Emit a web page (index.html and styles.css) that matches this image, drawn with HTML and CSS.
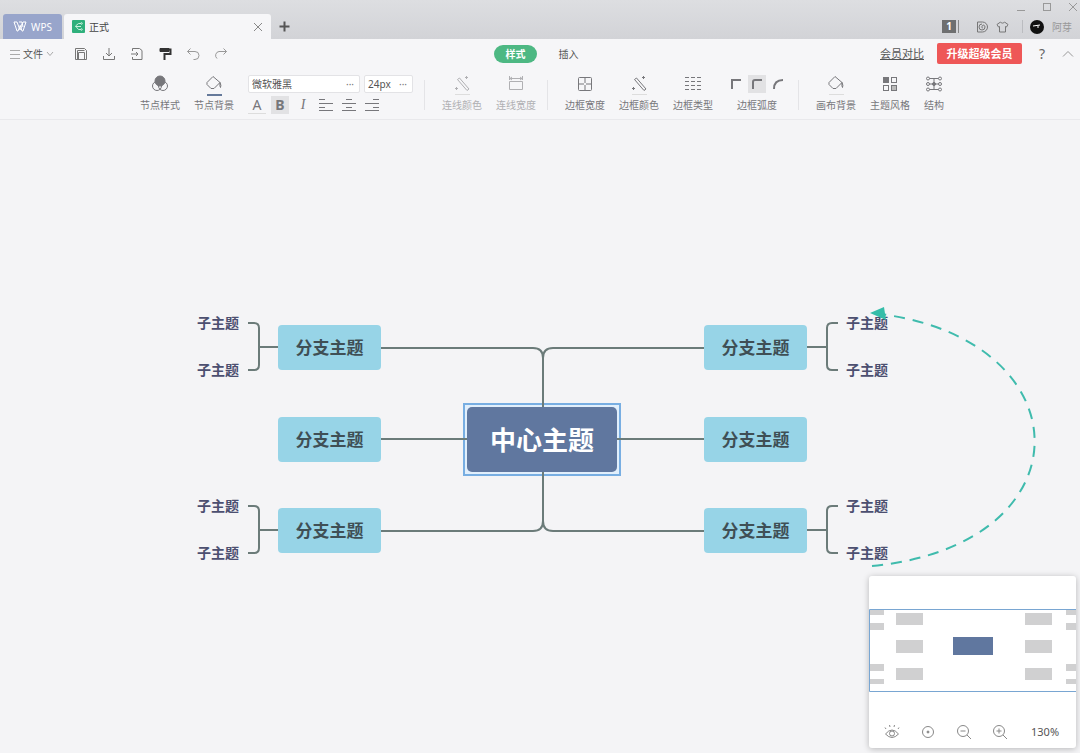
FILE: index.html
```html
<!DOCTYPE html>
<html lang="zh-CN">
<head>
    <meta charset="UTF-8">
    <meta name="viewport" content="width=device-width, initial-scale=1.0">
    <title>正式 - WPS</title>
    <link rel="stylesheet" href="styles.css">
</head>
<body>
    <header class="titlebar">
        <nav class="tabs">
            <button class="tab tab-home">
                <svg width="14" height="11" viewBox="0 0 14 11"><path d="M1 1h3l3 8 2-4M1 1l3 9h1l2-5M6 1h3l1 5M13 1h-3l-2 4M13 1l-3 9H9L7 4"/></svg>
                WPS
            </button>
            <div class="tab tab-doc">
                <svg class="doc-icon" width="13" height="13" viewBox="0 0 13 13"><rect width="13" height="13" rx="1"/><path d="M9 3.500H6.500L3.500 6l3 3.500H9M3.500 6.500H9"/><circle cx="9.500" cy="3.500" r="0.800"/><circle cx="9.500" cy="9.500" r="0.800"/></svg>
                <span class="tab-name">正式</span>
                <button class="icon-btn" aria-label="关闭"><svg width="10" height="10" viewBox="0 0 10 10"><path d="M1 1l8 8M9 1L1 9"/></svg></button>
            </div>
            <button class="icon-btn tab-add" aria-label="新建"><svg width="11" height="11" viewBox="0 0 11 11"><path d="M5.500 .5v10M.5 5.500h10"/></svg></button>
        </nav>
        <div class="title-side">
            <div class="window-controls">
                <button class="icon-btn" aria-label="最小化"><svg width="10" height="10" viewBox="0 0 10 10"><path d="M1 8.500h8"/></svg></button>
                <button class="icon-btn" aria-label="最大化"><svg width="10" height="10" viewBox="0 0 10 10"><rect x="1.500" y="1.500" width="7" height="7"/></svg></button>
                <button class="icon-btn" aria-label="关闭窗口"><svg width="10" height="10" viewBox="0 0 10 10"><path d="M1 1l8 8M9 1L1 9"/></svg></button>
            </div>
            <div class="account">
                <span class="count">1</span>
                <button class="icon-btn docer" aria-label="稻壳"><svg width="12" height="12" viewBox="0 0 12 12"><path d="M1.500 1h5a5 5 0 0 1 0 10h-5zM6 3a3 3 0 1 0 3 3c0-1.500-1.500-2.500-2.500-1.500S6 7.500 7 7"/></svg></button>
                <button class="icon-btn" aria-label="皮肤"><svg width="13" height="12" viewBox="0 0 13 12"><path d="M4.500 1L1 3.500l1.500 2.500 1-.5V11h6V5.500l1 .5L12 3.500 8.500 1c-.5 1.500-3.500 1.500-4 0z"/></svg></button>
                <i class="account-line"></i>
                <svg class="avatar" width="14" height="14" viewBox="0 0 14 14"><circle cx="7" cy="7" r="7"/><path d="M3 6l7-1M8 5.500v2.500"/></svg>
                <span class="user">阿芽</span>
            </div>
        </div>
    </header>

    <div class="menubar">
        <div class="quick">
            <button class="file-btn">
                <svg width="10" height="10" viewBox="0 0 10 10"><path d="M0 1.500h10M0 5.500h10M0 9.500h10"/></svg>
                文件
                <svg width="8" height="6" viewBox="0 0 8 6"><path d="M1 1l3 3.500L7 1"/></svg>
            </button>
            <button class="icon-btn" aria-label="保存"><svg width="14" height="14" viewBox="0 0 14 14"><path d="M1.500 1.500h9l2 2v9h-11zM4.500 5.500h6v7h-6zM3.500 12V3.500h7"/></svg></button>
            <button class="icon-btn" aria-label="下载"><svg width="14" height="14" viewBox="0 0 14 14"><path d="M7 1v8M4 6l3 3 3-3M1.500 9v3.500h11V9"/></svg></button>
            <button class="icon-btn" aria-label="导出"><svg width="14" height="14" viewBox="0 0 14 14"><path d="M2.500 4V1.500h7l2.500 2v9H2.500V10M1 7h7M6 5l2 2-2 2"/></svg></button>
            <button class="icon-btn painter" aria-label="格式刷"><svg width="14" height="14" viewBox="0 0 14 14"><path class="solid" d="M2 1.500h9v3H2z"/><path d="M11 2.500h1.500V7H6.500v6" stroke-width="2"/></svg></button>
            <button class="icon-btn light" aria-label="撤销"><svg width="14" height="14" viewBox="0 0 14 14"><path d="M4.500 1.500l-3 3 3 3M1.500 4.500H9a4 4 0 0 1 0 8H7.500"/></svg></button>
            <button class="icon-btn light" aria-label="恢复"><svg width="14" height="14" viewBox="0 0 14 14"><path d="M9.500 1.500l3 3-3 3M12.500 4.500H5a4 4 0 0 0-2 7"/></svg></button>
        </div>
        <div class="menu-tabs">
            <button class="menu-tab active">样式</button>
            <button class="menu-tab">插入</button>
        </div>
        <div class="menu-side">
            <a class="compare" href="#">会员对比</a>
            <button class="upgrade">升级超级会员</button>
            <button class="help">?</button>
            <button class="icon-btn" aria-label="收起"><svg width="12" height="8" viewBox="0 0 12 8"><path d="M1 6.500l5-5 5 5"/></svg></button>
        </div>
    </div>

    <div class="ribbon">
        <button class="tool">
            <svg width="18" height="18" viewBox="0 0 18 18"><circle cx="6" cy="11" r="4.500"/><circle cx="12" cy="11" r="4.500"/><circle class="solid" cx="9" cy="6" r="5"/></svg>
            节点样式
        </button>
        <button class="tool">
            <svg width="18" height="18" viewBox="0 0 18 18"><path d="M8 1.500l7 6-6 6H6l-4-4v-2zM15 7.500q1.500 3 .5 5-1-1-.5-5"/></svg>
            节点背景
            <i class="swatch swatch-blue"></i>
        </button>
        <div class="font-group">
            <div class="font-row">
                <label class="field field-family"><input type="text" value="微软雅黑" aria-label="字体"><span>···</span></label>
                <label class="field field-size"><input type="text" value="24px" aria-label="字号"><span>···</span></label>
            </div>
            <div class="font-row format-row">
                <button class="format color">A</button>
                <button class="format bold">B</button>
                <button class="format italic">I</button>
                <button class="format" aria-label="左对齐"><svg width="16" height="14" viewBox="0 0 16 14"><path d="M1 1.500h6M1 5.500h14M1 9.500h6M1 12.500h14"/></svg></button>
                <button class="format" aria-label="居中"><svg width="16" height="14" viewBox="0 0 16 14"><path d="M5 1.500h6M1 5.500h14M5 9.500h6M1 12.500h14"/></svg></button>
                <button class="format" aria-label="右对齐"><svg width="16" height="14" viewBox="0 0 16 14"><path d="M9 1.500h6M1 5.500h14M9 9.500h6M1 12.500h14"/></svg></button>
            </div>
        </div>
        <i class="divider"></i>
        <button class="tool" disabled>
            <svg width="18" height="18" viewBox="0 0 18 18"><path d="M4.500 4.500l2-1.500 9.500 11-2 1.500zM12 2.500h3M13.500 1v3M2 13.500h3M3.500 12v3"/></svg>
            连线颜色
            <i class="swatch"></i>
        </button>
        <button class="tool" disabled>
            <svg width="18" height="18" viewBox="0 0 18 18"><path d="M2.500 6.500h13v8h-13zM2.500 1v4M15.500 1v4M3 3.500h12M5 2L3 3.500 5 5M13 2l2 1.500L13 5"/></svg>
            连线宽度
        </button>
        <i class="divider"></i>
        <button class="tool">
            <svg width="18" height="18" viewBox="0 0 18 18"><rect x="2.500" y="2.500" width="13" height="13" rx="1"/><path d="M9 3v12M3 9h12" stroke-dasharray="5 2"/></svg>
            边框宽度
        </button>
        <button class="tool">
            <svg width="18" height="18" viewBox="0 0 18 18"><path d="M4.500 4.500l2-1.500 9.500 11-2 1.500zM12 2.500h3M13.500 1v3M2 13.500h3M3.500 12v3"/></svg>
            边框颜色
            <i class="swatch"></i>
        </button>
        <button class="tool">
            <svg width="18" height="18" viewBox="0 0 18 18"><path d="M1 2.500h16M1 6.500h16M1 10.500h16M1 14.500h16" stroke-dasharray="4 2"/></svg>
            边框类型
        </button>
        <div class="tool corners">
            <div class="corner-row">
                <button class="corner" aria-label="直角"><svg width="12" height="12" viewBox="0 0 12 12"><path d="M2 11V2h9"/></svg></button>
                <button class="corner selected" aria-label="小圆角"><svg width="12" height="12" viewBox="0 0 12 12"><path d="M2 11V4q0-2 2-2h7"/></svg></button>
                <button class="corner" aria-label="大圆角"><svg width="12" height="12" viewBox="0 0 12 12"><path d="M2 11q0-9 9-9"/></svg></button>
            </div>
            边框弧度
        </div>
        <i class="divider"></i>
        <button class="tool">
            <svg width="18" height="18" viewBox="0 0 18 18"><path d="M8 1.500l7 6-6 6H6l-4-4v-2zM15 7.500q1.500 3 .5 5-1-1-.5-5"/></svg>
            画布背景
            <i class="swatch"></i>
        </button>
        <button class="tool">
            <svg width="18" height="18" viewBox="0 0 18 18"><rect class="solid" x="2.500" y="2.500" width="5" height="5"/><rect x="10.500" y="2.500" width="5" height="5"/><rect x="2.500" y="10.500" width="5" height="5"/><rect class="soft" x="10.500" y="10.500" width="5" height="5"/></svg>
            主题风格
        </button>
        <button class="tool tool-narrow">
            <svg width="18" height="18" viewBox="0 0 18 18"><path d="M4.500 3.500h9M4.500 9h9M4.500 14.500h9M9 3.500v11"/><circle cx="3" cy="3.500" r="1.500"/><circle cx="15" cy="3.500" r="1.500"/><circle cx="3" cy="9" r="1.500"/><circle cx="15" cy="9" r="1.500"/><circle cx="3" cy="14.500" r="1.500"/><circle cx="15" cy="14.500" r="1.500"/><circle class="solid" cx="9" cy="9" r="1.500"/></svg>
            结构
        </button>
    </div>

    <main class="canvas">
        <div class="map">
            <svg class="links" width="860" height="280" viewBox="0 0 860 280">
                <path d="M190 48H343q10 0 10 10v60M514 48H363q-10 0-10 10"/>
                <path d="M190 139H514"/>
                <path d="M190 231H343q10 0 10-10v-60M514 231H363q-10 0-10-10"/>
                <!-- sub-topic brackets -->
                <path d="M58 23h6q5 0 5 5v37q0 5-5 5h-6M69 47h19"/>
                <path d="M58 206h6q5 0 5 5v37q0 5-5 5h-6M69 230h19"/>
                <path d="M648 23h-6q-5 0-5 5v37q0 5 5 5h6M637 47h-21"/>
                <path d="M648 206h-6q-5 0-5 5v37q0 5 5 5h6M637 230h-21"/>
            </svg>
            <div class="node center">中心主题</div>
            <div class="node branch left row1">分支主题</div>
            <div class="node branch left row2">分支主题</div>
            <div class="node branch left row3">分支主题</div>
            <div class="node branch right row1">分支主题</div>
            <div class="node branch right row2">分支主题</div>
            <div class="node branch right row3">分支主题</div>
            <div class="node sub left s1">子主题</div>
            <div class="node sub left s2">子主题</div>
            <div class="node sub left s3">子主题</div>
            <div class="node sub left s4">子主题</div>
            <div class="node sub right s1">子主题</div>
            <div class="node sub right s2">子主题</div>
            <div class="node sub right s3">子主题</div>
            <div class="node sub right s4">子主题</div>
            <svg class="relation" width="860" height="280" viewBox="0 0 860 280">
                <path class="dash" d="M682 266C900 245 895 40 690 14"/>
                <path class="head" d="M680 13l14-6 2 13z"/>
            </svg>
        </div>

        <aside class="navigator">
            <svg class="overview" viewBox="0 0 207 83">
                <path class="block" d="M0 1h15v5H0zM0 14h15v7H0zM0 55h15v7H0zM0 70h15v5H0zM197 1h10v5h-10zM197 14h10v7h-10zM197 55h10v7h-10zM197 70h10v5h-10z"/>
                <path class="block" d="M27 4h27v12H27zM27 31h27v13H27zM27 59h27v12H27zM156 4h27v12h-27zM156 31h27v13h-27zM156 59h27v12h-27z"/>
                <rect class="root" x="84" y="28" width="40" height="18"/>
                <path class="frame" d="M207 .5H.5v82H207"/>
            </svg>
            <div class="zoom-bar">
                <button class="icon-btn" aria-label="预览"><svg width="16" height="16" viewBox="0 0 16 16"><path d="M1.500 10q6.500-8 13 0-6.500 7-13 0zM2 5L1 3.500M6 3l-.5-2M10 3l.5-2M14 5l1-1.500"/><circle cx="8" cy="9.500" r="2.500"/></svg></button>
                <button class="icon-btn" aria-label="定位中心"><svg width="16" height="16" viewBox="0 0 16 16"><circle cx="8" cy="8" r="5.500"/><circle class="solid" cx="8" cy="8" r="1"/></svg></button>
                <button class="icon-btn" aria-label="缩小"><svg width="16" height="16" viewBox="0 0 16 16"><circle cx="7" cy="7" r="5.500"/><path d="M4.500 7h5M11 11l4 4"/></svg></button>
                <button class="icon-btn" aria-label="放大"><svg width="16" height="16" viewBox="0 0 16 16"><circle cx="7" cy="7" r="5.500"/><path d="M4.500 7h5M7 4.500v5M11 11l4 4"/></svg></button>
                <span class="percent">130%</span>
            </div>
        </aside>
    </main>
</body>
</html>
```

FILE: styles.css
```css
* { box-sizing: border-box; }
body { margin: 0; min-height: 100vh; display: flex; flex-direction: column; background: #f4f4f6; color: #555; font: 10px/16px "Noto Sans", "Noto Sans CJK SC", sans-serif; overflow: hidden; }
button { margin: 0; padding: 0; border: none; background: none; color: inherit; font: inherit; cursor: pointer; }
svg { display: block; flex: none; fill: none; stroke: currentColor; stroke-width: 1; }
svg .solid { fill: currentColor; }
svg .soft { fill: #bbb; }
.icon-btn { display: flex; align-items: center; justify-content: center; }

/* Title bar */
.titlebar { display: flex; justify-content: space-between; height: 39px; background: linear-gradient(#dddee1, #d2d3d7); }
.tabs { display: flex; align-items: flex-end; padding-left: 3px; }
.tab { display: flex; align-items: center; height: 25px; border-radius: 3px 3px 0 0; }
.tab-home { gap: 4px; width: 59px; justify-content: center; background: #98a5cb; color: #fff; }
.tab-doc { width: 207px; margin-left: 2px; padding: 0 8px; gap: 4px; background: #f6f6f8; color: #444; }
.tab-doc .icon-btn { margin-left: auto; color: #888; }
.doc-icon { color: #c9f0dd; }
.doc-icon rect { fill: #2fb07c; stroke: none; }
.tab-add { width: 26px; height: 25px; color: #555; }
.tab-add svg { stroke-width: 2; }
.title-side { display: flex; flex-direction: column; align-items: flex-end; }
.window-controls { display: flex; gap: 16px; height: 14px; padding-right: 2px; color: #999; }
.account { display: flex; align-items: center; gap: 8px; height: 25px; padding-right: 8px; color: #777; }
.count { width: 14px; height: 13px; margin-right: 8px; background: #6e6f70; box-shadow: 2px 0 #d4d5d9, 3px 0 #888; color: #fff; line-height: 13px; text-align: center; font-weight: bold; }
.docer { padding-left: 4px; }
.account-line { width: 1px; height: 13px; margin: 0 -1px 0 5px; background: #bbbcc0; }
.avatar { color: #fff; }
.avatar circle { fill: #111; stroke: none; }
.user { color: #999; }

/* Menu bar */
.menubar { display: grid; grid-template-columns: 1fr auto 1fr; align-items: center; height: 29px; background: #f6f6f8; }
.quick { display: flex; align-items: center; gap: 14px; padding-left: 10px; color: #777; }
.file-btn { display: flex; align-items: center; gap: 3px; margin-right: 6px; color: #555; }
.file-btn svg { color: #aaa; }
.painter { color: #333; }
.light { color: #999; }
.menu-tabs { display: flex; gap: 10px; padding-left: 4px; }
.menu-tab { width: 43px; height: 18px; border-radius: 9px; line-height: 18px; }
.menu-tab.active { background: #4db883; color: #fff; font-weight: bold; }
.menu-side { display: flex; align-items: center; justify-content: flex-end; gap: 13px; padding-right: 6px; color: #999; }
.compare { color: #555; font-size: 11px; }
.upgrade { width: 85px; height: 21px; border-radius: 2px; background: #ee5757; color: #fff; font-size: 11px; font-weight: bold; }
.help { width: 14px; color: #666; font-size: 14px; }

/* Ribbon */
.ribbon { display: flex; height: 52px; padding-left: 133px; background: #f6f6f8; border-bottom: 1px solid #e9e9ec; color: #77777b; }
.tool { position: relative; display: flex; flex-direction: column; align-items: center; gap: 4px; width: 54px; padding-top: 7px; white-space: nowrap; }
.tool:disabled { color: #b0b0b3; cursor: default; }
.tool-narrow { width: 34px; }
.swatch { position: absolute; top: 26px; left: 20px; width: 15px; height: 1px; background: #ddd; }
.swatch-blue { height: 2px; background: #65799a; }
.divider { width: 1px; height: 30px; margin: 12px 10px 0 4px; background: #e4e4e7; }
.corners { width: 74px; }
.corner-row { display: flex; gap: 3px; }
.corner { display: flex; align-items: center; justify-content: center; width: 18px; height: 18px; }
.corner.selected { background: #e2e2e4; }
.corner svg { stroke-width: 2; }
.font-group { display: flex; flex-direction: column; gap: 3px; margin: 0 7px; padding-top: 7px; }
.font-row { display: flex; gap: 4px; }
.field { display: flex; align-items: center; height: 18px; padding: 0 5px 0 3px; border: 1px solid #e3e3e6; border-radius: 2px; background: #fff; }
.field input { flex: 1; min-width: 0; padding: 0; border: none; outline: none; background: none; color: #555; font: inherit; }
.field-family { width: 112px; }
.field-size { width: 49px; }
.format-row { gap: 5px; align-items: center; }
.format { display: flex; align-items: center; justify-content: center; width: 18px; height: 18px; font-size: 14px; }
.format.color { border-bottom: 1px solid #ddd; }
.format.bold { background: #e2e2e4; font-weight: bold; }
.format.italic { font-family: "Liberation Serif", serif; font-style: italic; }

/* Mind map */
.canvas { position: relative; flex: 1; }
.map { position: absolute; top: 180px; left: calc(50% - 350px); width: 860px; height: 280px; font-family: "Noto Sans CJK SC", sans-serif; font-weight: bold; }
.links, .relation { position: absolute; top: 0; left: 0; }
.links { color: #6b7b79; stroke-width: 2; }
.relation { color: #3fbbad; stroke-width: 2; }
.dash { stroke-dasharray: 11 8; }
.head { fill: #35bda9; stroke: none; }
.node { position: absolute; display: flex; align-items: center; justify-content: center; padding-bottom: 2px; white-space: nowrap; }
.center { top: 107px; left: 277px; width: 150px; height: 65px; border-radius: 5px; background: #60779f; color: #fff; font-size: 26px; }
.center::before { content: ""; position: absolute; z-index: -1; inset: -4px; border: 2px solid #78aee2; background: #e1effc; }
.branch { width: 103px; height: 45px; border-radius: 4px; background: #97d4e7; color: #3f4f55; font-size: 17px; }
.branch.left { left: 88px; }
.branch.right { left: 514px; }
.row1 { top: 25px; }
.row2 { top: 117px; }
.row3 { top: 208px; }
.sub { height: 20px; color: #4c4f70; font-size: 14px; }
.sub.left { left: 7px; }
.sub.right { left: 656px; }
.s1 { top: 13px; }
.s2 { top: 60px; }
.s3 { top: 196px; }
.s4 { top: 243px; }

/* Overview panel */
.navigator { position: absolute; right: 4px; bottom: 5px; width: 207px; padding-top: 33px; border-radius: 3px; background: #fff; box-shadow: 0 1px 6px rgba(0, 0, 0, 0.25); }
.overview { width: 100%; }
.overview .block { fill: #d0d0d1; stroke: none; }
.overview .root { fill: #60779f; stroke: none; }
.overview .frame { stroke: #79a6d2; }
.zoom-bar { display: flex; align-items: center; gap: 20px; padding: 32px 15px 8px 15px; color: #888; }
.percent { margin-left: 3px; color: #555; font-size: 11px; }
```
